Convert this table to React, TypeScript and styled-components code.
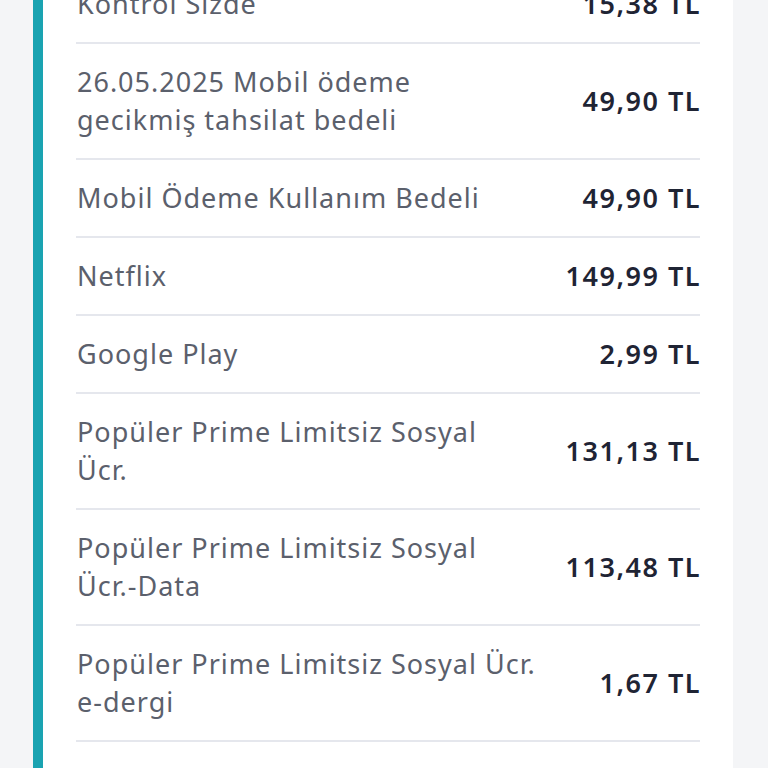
import React from "react";
import styled, { createGlobalStyle } from "styled-components";

const Global = createGlobalStyle`
  html, body { margin: 0; padding: 0; background: #f4f5f7; }
  body { font-family: "Noto Sans", Lato, sans-serif; overflow: hidden; }
`;

const Page = styled.div`
  width: 768px;
  height: 768px;
  overflow: hidden;
  padding-left: 33px;
  box-sizing: border-box;
`;

const Card = styled.div`
  width: 700px;
  box-sizing: border-box;
  margin-top: -34px;
  background: #ffffff;
  border-left: 10px solid #1aa3b1;
  padding: 0 33px 0 33px;
`;

const Row = styled.div<{ $faint?: boolean }>`
  display: flex;
  align-items: center;
  justify-content: space-between;
  gap: 24px;
  padding: 19px 0;
  border-bottom: 2px solid #e5e7ed;
  opacity: ${(p) => (p.$faint ? 0.04 : 1)};
`;

const Label = styled.div`
  font-size: 27px;
  line-height: 38px;
  letter-spacing: 1px;
  color: #5b606c;
  white-space: pre-line;
  padding-left: 1px;
`;

const Value = styled.div`
  font-size: 27px;
  line-height: 38px;
  font-weight: 600;
  letter-spacing: 1.5px;
  color: #1f2434;
  white-space: nowrap;
  text-align: right;
  margin-right: -1px;
`;

const items: [string, string][] = [
  ["Kontrol Sizde", "15,38 TL"],
  ["26.05.2025 Mobil ödeme\ngecikmiş tahsilat bedeli", "49,90 TL"],
  ["Mobil Ödeme Kullanım Bedeli", "49,90 TL"],
  ["Netflix", "149,99 TL"],
  ["Google Play", "2,99 TL"],
  ["Popüler Prime Limitsiz Sosyal\nÜcr.", "131,13 TL"],
  ["Popüler Prime Limitsiz Sosyal\nÜcr.-Data", "113,48 TL"],
  ["Popüler Prime Limitsiz Sosyal Ücr.\ne-dergi", "1,67 TL"],
];

export default function App() {
  return (
    <Page>
      <Global />
      <Card>
        {items.map(([l, v], i) => (
          <Row key={i}>
            <Label>{l}</Label>
            <Value>{v}</Value>
          </Row>
        ))}
        <Row $faint>
          <Label>Kontrol Sizde Paketi</Label>
          <Value>10,00 TL</Value>
        </Row>
      </Card>
    </Page>
  );
}
